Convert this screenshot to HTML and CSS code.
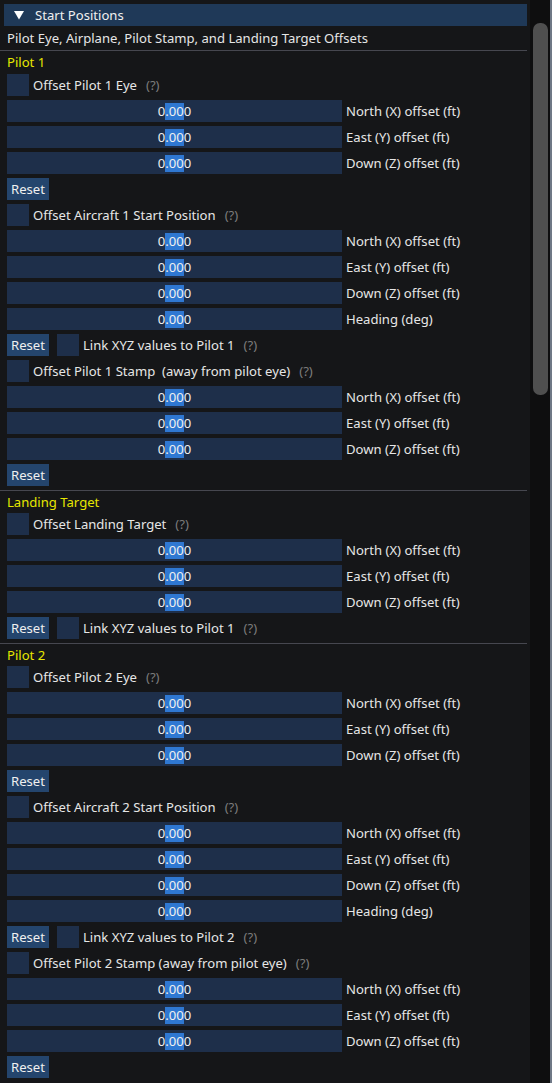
FILE: index.html
```html
<!DOCTYPE html>
<html>
<head>
<meta charset="utf-8">
<link rel="stylesheet" href="styles.css">
</head>
<body>
<div class="window">
  <div class="content">
    <div class="header">
      <svg class="arrow" width="10" height="9" viewBox="0 0 10 9"><polygon points="0,0 10,0 5,8.5" fill="#ffffff"/></svg>
      <span>Start Positions</span>
    </div>
    <div class="text sub">Pilot Eye, Airplane, Pilot Stamp, and Landing Target Offsets</div>
    <div class="sep"></div>
    <div class="text title">Pilot 1</div>

    <div class="row"><span class="cb"></span><span class="lbl">Offset Pilot 1 Eye</span><span class="help">(?)</span></div>
    <div class="row"><span class="drag"><span class="v">0<span class="sel">.00</span>0</span></span><span class="dl">North (X) offset (ft)</span></div>
    <div class="row"><span class="drag"><span class="v">0<span class="sel">.00</span>0</span></span><span class="dl">East (Y) offset (ft)</span></div>
    <div class="row"><span class="drag"><span class="v">0<span class="sel">.00</span>0</span></span><span class="dl">Down (Z) offset (ft)</span></div>
    <div class="row"><span class="btn">Reset</span></div>

    <div class="row"><span class="cb"></span><span class="lbl">Offset Aircraft 1 Start Position</span><span class="help">(?)</span></div>
    <div class="row"><span class="drag"><span class="v">0<span class="sel">.00</span>0</span></span><span class="dl">North (X) offset (ft)</span></div>
    <div class="row"><span class="drag"><span class="v">0<span class="sel">.00</span>0</span></span><span class="dl">East (Y) offset (ft)</span></div>
    <div class="row"><span class="drag"><span class="v">0<span class="sel">.00</span>0</span></span><span class="dl">Down (Z) offset (ft)</span></div>
    <div class="row"><span class="drag"><span class="v">0<span class="sel">.00</span>0</span></span><span class="dl">Heading (deg)</span></div>
    <div class="row"><span class="btn">Reset</span><span class="cb sp"></span><span class="lbl">Link XYZ values to Pilot 1</span><span class="help">(?)</span></div>

    <div class="row"><span class="cb"></span><span class="lbl">Offset Pilot 1 Stamp  (away from pilot eye)</span><span class="help">(?)</span></div>
    <div class="row"><span class="drag"><span class="v">0<span class="sel">.00</span>0</span></span><span class="dl">North (X) offset (ft)</span></div>
    <div class="row"><span class="drag"><span class="v">0<span class="sel">.00</span>0</span></span><span class="dl">East (Y) offset (ft)</span></div>
    <div class="row"><span class="drag"><span class="v">0<span class="sel">.00</span>0</span></span><span class="dl">Down (Z) offset (ft)</span></div>
    <div class="row"><span class="btn">Reset</span></div>

    <div class="sep"></div>
    <div class="text title tight">Landing Target</div>
    <div class="row"><span class="cb"></span><span class="lbl">Offset Landing Target</span><span class="help">(?)</span></div>
    <div class="row"><span class="drag"><span class="v">0<span class="sel">.00</span>0</span></span><span class="dl">North (X) offset (ft)</span></div>
    <div class="row"><span class="drag"><span class="v">0<span class="sel">.00</span>0</span></span><span class="dl">East (Y) offset (ft)</span></div>
    <div class="row"><span class="drag"><span class="v">0<span class="sel">.00</span>0</span></span><span class="dl">Down (Z) offset (ft)</span></div>
    <div class="row"><span class="btn">Reset</span><span class="cb sp"></span><span class="lbl">Link XYZ values to Pilot 1</span><span class="help">(?)</span></div>

    <div class="sep"></div>
    <div class="text title tight">Pilot 2</div>
    <div class="row"><span class="cb"></span><span class="lbl">Offset Pilot 2 Eye</span><span class="help">(?)</span></div>
    <div class="row"><span class="drag"><span class="v">0<span class="sel">.00</span>0</span></span><span class="dl">North (X) offset (ft)</span></div>
    <div class="row"><span class="drag"><span class="v">0<span class="sel">.00</span>0</span></span><span class="dl">East (Y) offset (ft)</span></div>
    <div class="row"><span class="drag"><span class="v">0<span class="sel">.00</span>0</span></span><span class="dl">Down (Z) offset (ft)</span></div>
    <div class="row"><span class="btn">Reset</span></div>

    <div class="row"><span class="cb"></span><span class="lbl">Offset Aircraft 2 Start Position</span><span class="help">(?)</span></div>
    <div class="row"><span class="drag"><span class="v">0<span class="sel">.00</span>0</span></span><span class="dl">North (X) offset (ft)</span></div>
    <div class="row"><span class="drag"><span class="v">0<span class="sel">.00</span>0</span></span><span class="dl">East (Y) offset (ft)</span></div>
    <div class="row"><span class="drag"><span class="v">0<span class="sel">.00</span>0</span></span><span class="dl">Down (Z) offset (ft)</span></div>
    <div class="row"><span class="drag"><span class="v">0<span class="sel">.00</span>0</span></span><span class="dl">Heading (deg)</span></div>
    <div class="row"><span class="btn">Reset</span><span class="cb sp"></span><span class="lbl">Link XYZ values to Pilot 2</span><span class="help">(?)</span></div>

    <div class="row"><span class="cb"></span><span class="lbl">Offset Pilot 2 Stamp (away from pilot eye)</span><span class="help">(?)</span></div>
    <div class="row"><span class="drag"><span class="v">0<span class="sel">.00</span>0</span></span><span class="dl">North (X) offset (ft)</span></div>
    <div class="row"><span class="drag"><span class="v">0<span class="sel">.00</span>0</span></span><span class="dl">East (Y) offset (ft)</span></div>
    <div class="row"><span class="drag"><span class="v">0<span class="sel">.00</span>0</span></span><span class="dl">Down (Z) offset (ft)</span></div>
    <div class="row"><span class="btn">Reset</span></div>
  </div>
  <div class="scrollbar"><div class="grab"></div></div>
  <div class="edge"></div>
</div>
</body>
</html>
```

FILE: styles.css
```css
html, body {
  margin: 0;
  padding: 0;
  background: #151618;
  width: 552px;
  height: 1083px;
  overflow: hidden;
}
body {
  font-family: "Noto Sans", "Open Sans", sans-serif;
  font-size: 13.1px;
  color: #e6e6e6;
}
.window {
  display: flex;
  height: 1083px;
}
.content {
  width: 530px;
  display: flex;
  flex-direction: column;
  gap: 4px;
  padding-top: 4px;
  box-sizing: border-box;
}
.header {
  margin-left: 4px;
  width: 523px;
  height: 22px;
  background: #1f3958;
  display: flex;
  align-items: center;
  color: #f0f0f0;
}
.arrow {
  margin-left: 10px;
  margin-right: 11px;
}
.text {
  padding-left: 7px;
  height: 15px;
  line-height: 15px;
  white-space: pre;
}
.text.sub {
  height: 16px;
  line-height: 16px;
}
.text.tight {
  height: 14px;
  line-height: 14px;
}
.title {
  color: #e6e600;
}
.sep {
  height: 1px;
  width: 527px;
  background: #46474f;
}
.row {
  height: 22px;
  display: flex;
  align-items: center;
  padding-left: 7px;
  white-space: pre;
}
.cb {
  width: 22px;
  height: 22px;
  background: #1e2f4a;
  flex: none;
}
.cb.sp {
  margin-left: 8px;
}
.lbl {
  margin-left: 4px;
  line-height: 22px;
}
.help {
  margin-left: 9px;
  color: #7c7c7c;
  line-height: 22px;
}
.drag {
  width: 335px;
  height: 22px;
  background: #1e2f4a;
  display: flex;
  align-items: center;
  justify-content: center;
  flex: none;
  color: #f0f0f0;
}
.v {
  line-height: 17px;
}
.sel {
  background: #2f78d2;
  display: inline-block;
  height: 17px;
  line-height: 17px;
}
.dl {
  margin-left: 4px;
  line-height: 22px;
}
.btn {
  width: 42px;
  height: 22px;
  line-height: 22px;
  text-align: center;
  background: #24456d;
  color: #f0f0f0;
  flex: none;
}
.scrollbar {
  width: 20px;
  background: #0e0e0f;
  display: flex;
  flex-direction: column;
}
.grab {
  margin-top: 23px;
  margin-left: 3px;
  width: 15px;
  height: 372px;
  border-radius: 7px;
  background: #4f4f4f;
}
.edge {
  width: 2px;
  background: #6f7886;
}
```
